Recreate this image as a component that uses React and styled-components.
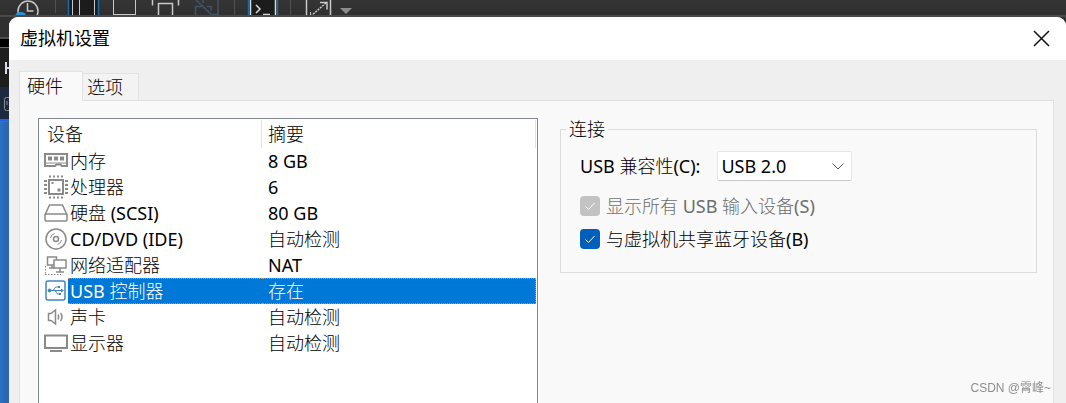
import React from 'react';
import styled, { createGlobalStyle, css } from 'styled-components';

const GlobalStyle = createGlobalStyle`
  * {
    box-sizing: border-box;
  }

  body {
    margin: 0;
    overflow: hidden;
    background: #333333;
    color: #000000;
    font-family: "Noto Sans", "Noto Sans CJK SC Light", "Noto Sans CJK SC", sans-serif;
    font-size: 18px;
    line-height: 26px;
  }
`;

const Desktop = styled.div`
  display: flex;
  flex-direction: column;
  height: 100vh;
`;

const Toolbar = styled.header`
  flex: none;
  height: 17px;
  overflow: hidden;
  background: linear-gradient(#343434, #303030);
  border-bottom: 2px solid #4a4a4a;

  & > svg {
    display: block;
  }
`;

const Workspace = styled.div`
  display: flex;
  flex: 1;
  min-height: 0;
`;

const Sidebar = styled.aside`
  display: flex;
  flex-direction: column;
  width: 9px;
  overflow: hidden;

  & > svg {
    display: block;
    flex: none;
  }
`;

const Wallpaper = styled.div`
  flex: 1;
  background: linear-gradient(90deg, #2b73c4, #2867b2 70%, #3a6698);
`;

const Dialog = styled.section`
  display: flex;
  flex-direction: column;
  flex: 1;
  min-width: 0;
  background: #efefef;
  border-radius: 9px 9px 0 0;
  overflow: hidden;
`;

const TitleBar = styled.div`
  display: flex;
  flex: none;
  align-items: center;
  justify-content: space-between;
  height: 43px;
  padding: 0 16px 0 11px;
  background: #ffffff;

  & > h1 {
    margin: 0;
    font-family: "DejaVu Sans Condensed", "Noto Sans CJK SC", sans-serif;
    font-size: 18px;
    font-weight: 400;
  }
`;

const CloseButton = styled.button`
  display: flex;
  padding: 0;
  border: 0;
  background: none;
`;

const TabList = styled.div`
  display: flex;
  flex: none;
  align-items: flex-end;
  height: 40px;
  padding-left: 10px;
`;

const Tab = styled.button`
  height: 27px;
  width: 56px;
  padding: 0 0 0 4px;
  border: 1px solid #e2e2e2;
  border-left: 0;
  border-bottom: 0;
  background: #f3f3f3;
  color: #000000;
  font: inherit;
  text-align: left;

  ${({ $active }) => $active && css`
    height: 30px;
    width: 64px;
    margin-bottom: -1px;
    padding: 0 0 2px 7px;
    border-left: 1px solid #e2e2e2;
    background: #f9f9f9;
    z-index: 1;
  `}
`;

const Panel = styled.div`
  display: flex;
  flex: 1;
  gap: 22px;
  align-items: flex-start;
  min-height: 0;
  margin: 0 12px 0 10px;
  padding: 17px 16px 0 18px;
  border: 1px solid #e0e0e0;
  border-bottom: 0;
  background: #f9f9f9;
`;

const DeviceList = styled.div`
  flex: 0 1 500px;
  align-self: stretch;
  padding: 1px 1px 0 0;
  border: 1px solid #828790;
  border-bottom: 0;
  background: #ffffff;
`;

const DeviceTable = styled.table`
  width: 100%;
  table-layout: fixed;
  border-spacing: 0;

  & th {
    height: 28px;
    padding: 0 0 0 8px;
    border-right: 1px solid #e2e2e2;
    font-weight: 400;
    text-align: left;
  }

  & th + th {
    padding-left: 6px;
  }
`;

const IconColumn = styled.col`
  width: 29px;
`;

const NameColumn = styled.col`
  width: 194px;
`;

const DeviceRow = styled.tr`
  & > td {
    height: 26px;
    padding: 0;
    line-height: 24px;
    border: 0 dotted #f08a28;
  }

  & > td:first-child {
    padding-left: 4px;
  }

  & > td:nth-child(2) {
    padding-left: 2px;
  }

  & > td:last-child {
    padding-left: 6px;
  }

  & svg {
    display: block;
  }

  ${({ $selected }) => $selected && css`
    & > td:not(:first-child) {
      background: #0078d7;
      border-width: 1px 0;
      color: #ffffff;
    }

    & > td:last-child {
      border-right-width: 1px;
    }
  `}
`;

const Connection = styled.fieldset`
  flex: 1;
  min-width: 0;
  height: 155px;
  margin: 0;
  padding: 9px 19px 0;
  border: 1px solid #dcdcdc;

  & > legend {
    margin-left: -14px;
    padding: 0 3px;
    line-height: 22px;
  }
`;

const Field = styled.div`
  display: flex;
  align-items: center;
  gap: 17px;
  height: 34px;
  margin-bottom: 6px;
`;

const SelectBox = styled.div`
  display: grid;
  align-items: center;
  width: 135px;
  height: 30px;
  border: 1px solid #e6e6e6;
  border-bottom-color: #c8c8c8;
  border-radius: 2px;
  background: #ffffff;

  & > select,
  & > svg {
    grid-area: 1 / 1;
  }

  & > select {
    height: 28px;
    padding: 0 0 0 3px;
    border: 0;
    appearance: none;
    background: transparent;
    color: #000000;
    font: inherit;
  }

  & > svg {
    justify-self: end;
    margin-right: 6px;
    pointer-events: none;
  }
`;

const CheckLabel = styled.label`
  display: flex;
  align-items: center;
  gap: 6px;
  height: 33px;
  color: ${({ $disabled }) => ($disabled ? '#6d6d6d' : '#000000')};
`;

const CheckBox = styled.span`
  display: grid;
  flex: none;

  & > * {
    grid-area: 1 / 1;
  }

  & > input {
    width: 20px;
    height: 20px;
    margin: 0;
    appearance: none;
    border-radius: 4px;
    background: #005fb8;
  }

  & > input:disabled {
    background: #c3c3c3;
  }

  & > svg {
    pointer-events: none;
  }
`;

const Watermark = styled.small`
  position: fixed;
  right: 15px;
  bottom: 6px;
  color: #8e8e8e;
  font-family: "Liberation Sans", "Noto Sans CJK SC", sans-serif;
  font-size: 12px;
  line-height: 18px;
`;

const ToolbarArt = () => (
  <svg width="360" height="17" viewBox="0 0 360 17" fill="none" aria-hidden="true">
    <circle cx="28" cy="11" r="10" stroke="#c8c8c8" strokeWidth="1.500" />
    <path d="M27.500 3v8h6" stroke="#c8c8c8" strokeWidth="1.500" />
    <path d="M15 17q0-5 6-5 4 0 5 3h12v2z" fill="#2593d6" />
    <path d="M55.500 0v13M234.500 0v17M290.500 0v17" stroke="#505050" />
    <path d="M68 0h31v17H68z" fill="#1c1c1c" />
    <path d="M68.500 0v17M98.500 0v17" stroke="#1c69a8" strokeWidth="1.500" />
    <path d="M72.500 0v17M79.500 0v17M94.500 0v17M113.500 0v17M135.500 0v17M114 14.500h22" stroke="#c8c8c8" />
    <path d="M152.500 0v5.500M178.500 0v5.500M158.500 17V3.500h14V17" stroke="#c8c8c8" strokeWidth="1.500" />
    <path d="M195.500 16V6.500h6M207 6.500h4V11M218 0v14.500h-6M196 0l18 17M203 0v3" stroke="#3f5469" strokeWidth="1.500" />
    <path d="M248 0h30v17h-30z" fill="#1c1c1c" />
    <path d="M248.500 0v17M277.500 0v17" stroke="#1c69a8" strokeWidth="1.500" />
    <path d="M250.500 0v17M275.500 0v17" stroke="#d8d8d8" strokeWidth="1.500" />
    <path d="M256 5l4 4-4 4M263 14.500h7" stroke="#d8d8d8" strokeWidth="1.500" />
    <path d="M306.500 0v17M330.500 0v17M320 2.500h7v7" stroke="#c8c8c8" strokeWidth="1.500" />
    <path d="M326 3l-14 12" stroke="#c8c8c8" strokeWidth="1.500" strokeDasharray="2 1" />
    <path d="M310.500 12v5" stroke="#c8c8c8" />
    <path d="M340 8h12l-6 6z" fill="#8c8c8c" />
  </svg>
);

const SidebarArt = () => (
  <svg width="9" height="105" viewBox="0 17 9 105" fill="none" aria-hidden="true">
    <path d="M0 17h9v105H0z" fill="#303030" />
    <path d="M0 39h9v8H0z" fill="#000000" />
    <path d="M0 38h9M0 47.500h9" stroke="#6a6a6a" />
    <path d="M0 48h9v39H0z" fill="#1e1e1e" />
    <path d="M6 62v12M6 68h3" stroke="#d8d8e8" strokeWidth="2" />
    <path d="M0 87h9v32H0z" fill="#1d2a3d" />
    <path d="M9 97.500H6.500a2 2 0 0 0-2 2v9a2 2 0 0 0 2 2H9M7 101v4" stroke="#8c8c8c" />
    <path d="M0 119h9v2H0z" fill="#1e66e8" />
    <path d="M0 121h9v1H0z" fill="#2b73c4" />
  </svg>
);

const icons = {
  memory: (
    <>
      <path d="M2 5h22v12h-5l-1.500-1.500h-4L12 17H2z" strokeWidth="2" />
      <path d="M5 7.500h4v4H5zM11 7.500h4v4h-4zM17 7.500h4v4h-4z" fill="#8a8a8a" stroke="none" />
      <path d="M3 14h20" />
    </>
  ),
  processor: (
    <>
      <path d="M6 5h14v14H6z" strokeWidth="2" />
      <path d="M6 1.500h15M6 22.500h15" strokeWidth="2" strokeDasharray="2 2" />
      <path d="M2.500 5v15M23.500 5v15" strokeWidth="3" strokeDasharray="2 2" />
      <path d="M8.500 7h2v2h-2zM14.500 13.500h3v3h-3z" fill="#8a8a8a" stroke="none" />
    </>
  ),
  disk: (
    <>
      <path d="M6.500 4h13L24 14v5q0 1-1 1H3q-1 0-1-1v-5z" strokeWidth="1.500" />
      <path d="M2 14q0-1 1.500-1h19q1.500 0 1.500 1" strokeWidth="1.500" />
    </>
  ),
  disc: (
    <>
      <circle cx="13" cy="12" r="10" strokeWidth="1.500" />
      <circle cx="13" cy="12" r="2.500" strokeWidth="1.500" />
      <path d="M7.500 11a5.500 5.500 0 0 1 4-4.500M18.500 13a5.500 5.500 0 0 1-4 4.500" />
    </>
  ),
  network: (
    <>
      <path d="M4.500 4h9v8h-9zM9 12v3M6 15h6" strokeWidth="1.500" />
      <path d="M11 7h12v8H11z" fill="#ffffff" strokeWidth="1.500" />
      <path d="M17 15v4M13 19h8" strokeWidth="1.500" />
      <path d="M2.500 13v9M2 21.500h16" strokeDasharray="1.500 1.500" />
    </>
  ),
  usb: (
    <g stroke="#3c87c1">
      <rect x="3" y="2" width="19" height="19" rx="2" strokeWidth="1.500" />
      <path d="M6 11.500h13M9.500 11.500c2 0 1.500-3.500 4-3.500h2M11.500 11.500c2 0 1.500 3.500 3.500 3.500h2" />
      <path d="M18 9.500l3 2-3 2zM15 7h2v2h-2zM16 14h2v2h-2z" fill="#3c87c1" stroke="none" />
      <circle cx="6.500" cy="11.500" r="1.500" fill="#3c87c1" />
    </g>
  ),
  sound: (
    <>
      <path d="M5.500 8.500h2.500L12.500 5v14L8 15.500H5.500z" strokeWidth="1.500" />
      <path d="M15 9.500q1.500 2.500 0 5M17.500 8q3 4 0 8" strokeWidth="1.500" />
    </>
  ),
  display: (
    <>
      <path d="M2 4.500h22V17H2z" strokeWidth="2" />
      <path d="M7 20h12" strokeWidth="2" />
    </>
  ),
};

const devices = [
  { icon: 'memory', name: '内存', summary: '8 GB' },
  { icon: 'processor', name: '处理器', summary: '6' },
  { icon: 'disk', name: '硬盘 (SCSI)', summary: '80 GB' },
  { icon: 'disc', name: 'CD/DVD (IDE)', summary: '自动检测' },
  { icon: 'network', name: '网络适配器', summary: 'NAT' },
  { icon: 'usb', name: 'USB 控制器', summary: '存在', selected: true },
  { icon: 'sound', name: '声卡', summary: '自动检测' },
  { icon: 'display', name: '显示器', summary: '自动检测' },
];

const DeviceIcon = ({ name }) => (
  <svg width="25" height="24" viewBox="0 0 25 24" fill="none" stroke="#8a8a8a" aria-hidden="true">
    {icons[name]}
  </svg>
);

const Check = ({ children, disabled }) => (
  <CheckLabel $disabled={disabled}>
    <CheckBox>
      <input type="checkbox" defaultChecked disabled={disabled} />
      <svg width="20" height="20" viewBox="0 0 20 20" fill="none" stroke="#ffffff" aria-hidden="true">
        <path d="M5.500 10.500l3 3 6-6.500" />
      </svg>
    </CheckBox>
    <span>{children}</span>
  </CheckLabel>
);

const App = () => (
  <Desktop>
    <GlobalStyle />
    <Toolbar><ToolbarArt /></Toolbar>
    <Workspace>
      <Sidebar>
        <SidebarArt />
        <Wallpaper />
      </Sidebar>
      <Dialog role="dialog" aria-labelledby="dialog-title">
        <TitleBar>
          <h1 id="dialog-title">虚拟机设置</h1>
          <CloseButton type="button" aria-label="关闭">
            <svg width="17" height="17" viewBox="0 0 17 17" stroke="#111111" strokeWidth="1.500">
              <path d="M1 1l15 15M16 1L1 16" />
            </svg>
          </CloseButton>
        </TitleBar>
        <TabList role="tablist">
          <Tab type="button" role="tab" aria-selected="true" $active>硬件</Tab>
          <Tab type="button" role="tab" aria-selected="false">选项</Tab>
        </TabList>
        <Panel>
          <DeviceList>
            <DeviceTable>
              <colgroup>
                <IconColumn />
                <NameColumn />
                <col />
              </colgroup>
              <thead>
                <tr>
                  <th colSpan={2}>设备</th>
                  <th>摘要</th>
                </tr>
              </thead>
              <tbody>
                {devices.map((device) => (
                  <DeviceRow key={device.icon} $selected={device.selected}>
                    <td><DeviceIcon name={device.icon} /></td>
                    <td>{device.name}</td>
                    <td>{device.summary}</td>
                  </DeviceRow>
                ))}
              </tbody>
            </DeviceTable>
          </DeviceList>
          <Connection>
            <legend>连接</legend>
            <Field>
              <label htmlFor="usb-version">USB 兼容性(C):</label>
              <SelectBox>
                <select id="usb-version" defaultValue="2.0">
                  <option value="2.0">USB 2.0</option>
                  <option value="3.1">USB 3.1</option>
                </select>
                <svg width="14" height="14" viewBox="0 0 14 14" fill="none" stroke="#555555" aria-hidden="true">
                  <path d="M1.500 4.500L7 10l5.500-5.500" />
                </svg>
              </SelectBox>
            </Field>
            <Check disabled>显示所有 USB 输入设备(S)</Check>
            <Check>与虚拟机共享蓝牙设备(B)</Check>
          </Connection>
        </Panel>
      </Dialog>
    </Workspace>
    <Watermark>CSDN @霄峰~</Watermark>
  </Desktop>
);

export default App;
